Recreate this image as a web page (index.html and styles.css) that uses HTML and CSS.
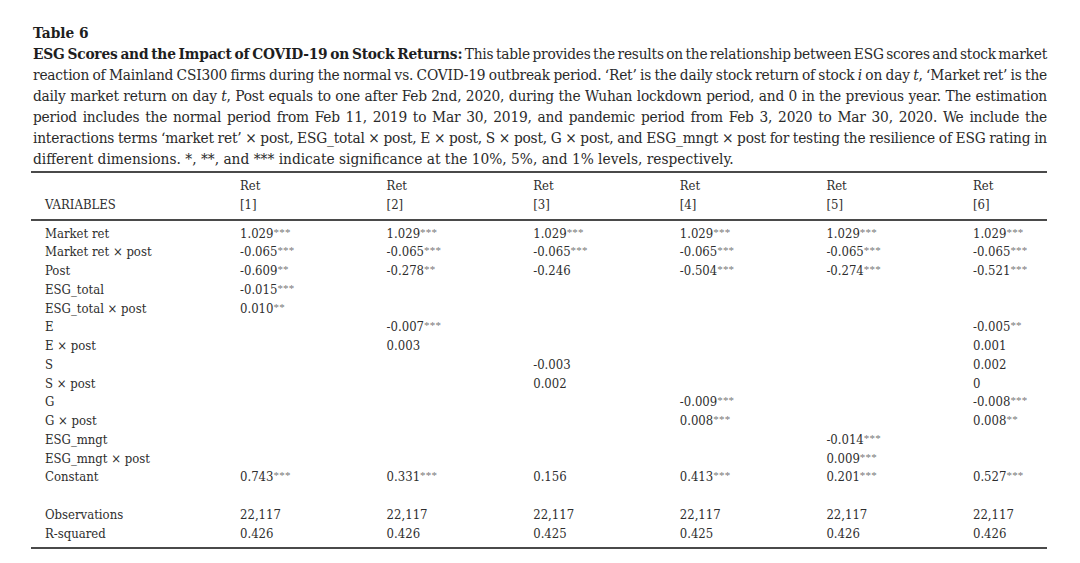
FILE: index.html
```html
<!DOCTYPE html>
<html>
<head>
<meta charset="utf-8">
<link rel="stylesheet" href="styles.css">
</head>
<body>
<div class="page">
  <div class="caption">
    <div class="title">Table 6</div>
    <div class="line"><b>ESG Scores and the Impact of COVID-19 on Stock Returns:</b> This table provides the results on the relationship between ESG scores and stock market</div>
    <div class="line">reaction of Mainland CSI300 firms during the normal vs. COVID-19 outbreak period. ‘Ret’ is the daily stock return of stock <i>i</i> on day <i>t</i>, ‘Market ret’ is the</div>
    <div class="line">daily market return on day <i>t</i>, Post equals to one after Feb 2nd, 2020, during the Wuhan lockdown period, and 0 in the previous year. The estimation</div>
    <div class="line">period includes the normal period from Feb 11, 2019 to Mar 30, 2019, and pandemic period from Feb 3, 2020 to Mar 30, 2020. We include the</div>
    <div class="line">interactions terms ‘market ret’ × post, ESG_total × post, E × post, S × post, G × post, and ESG_mngt × post for testing the resilience of ESG rating in</div>
    <div class="line last">different dimensions. *, **, and *** indicate significance at the 10%, 5%, and 1% levels, respectively.</div>
  </div>
  <table class="results">
    <colgroup>
      <col class="c-var"><col class="c-n"><col class="c-n"><col class="c-n"><col class="c-n"><col class="c-n"><col class="c-last">
    </colgroup>
    <thead>
      <tr class="h1"><th></th><th>Ret</th><th>Ret</th><th>Ret</th><th>Ret</th><th>Ret</th><th>Ret</th></tr>
      <tr class="h2"><th class="var">VARIABLES</th><th>[1]</th><th>[2]</th><th>[3]</th><th>[4]</th><th>[5]</th><th>[6]</th></tr>
    </thead>
    <tbody>
      <tr class="first"><td class="var">Market ret</td><td>1.029<sup>***</sup></td><td>1.029<sup>***</sup></td><td>1.029<sup>***</sup></td><td>1.029<sup>***</sup></td><td>1.029<sup>***</sup></td><td>1.029<sup>***</sup></td></tr>
      <tr><td class="var">Market ret × post</td><td>-0.065<sup>***</sup></td><td>-0.065<sup>***</sup></td><td>-0.065<sup>***</sup></td><td>-0.065<sup>***</sup></td><td>-0.065<sup>***</sup></td><td>-0.065<sup>***</sup></td></tr>
      <tr><td class="var">Post</td><td>-0.609<sup>**</sup></td><td>-0.278<sup>**</sup></td><td>-0.246</td><td>-0.504<sup>***</sup></td><td>-0.274<sup>***</sup></td><td>-0.521<sup>***</sup></td></tr>
      <tr><td class="var">ESG_total</td><td>-0.015<sup>***</sup></td><td></td><td></td><td></td><td></td><td></td></tr>
      <tr><td class="var">ESG_total × post</td><td>0.010<sup>**</sup></td><td></td><td></td><td></td><td></td><td></td></tr>
      <tr><td class="var">E</td><td></td><td>-0.007<sup>***</sup></td><td></td><td></td><td></td><td>-0.005<sup>**</sup></td></tr>
      <tr><td class="var">E × post</td><td></td><td>0.003</td><td></td><td></td><td></td><td>0.001</td></tr>
      <tr><td class="var">S</td><td></td><td></td><td>-0.003</td><td></td><td></td><td>0.002</td></tr>
      <tr><td class="var">S × post</td><td></td><td></td><td>0.002</td><td></td><td></td><td>0</td></tr>
      <tr><td class="var">G</td><td></td><td></td><td></td><td>-0.009<sup>***</sup></td><td></td><td>-0.008<sup>***</sup></td></tr>
      <tr><td class="var">G × post</td><td></td><td></td><td></td><td>0.008<sup>***</sup></td><td></td><td>0.008<sup>**</sup></td></tr>
      <tr><td class="var">ESG_mngt</td><td></td><td></td><td></td><td></td><td>-0.014<sup>***</sup></td><td></td></tr>
      <tr><td class="var">ESG_mngt × post</td><td></td><td></td><td></td><td></td><td>0.009<sup>***</sup></td><td></td></tr>
      <tr><td class="var">Constant</td><td>0.743<sup>***</sup></td><td>0.331<sup>***</sup></td><td>0.156</td><td>0.413<sup>***</sup></td><td>0.201<sup>***</sup></td><td>0.527<sup>***</sup></td></tr>
      <tr class="blank"><td class="var">&nbsp;</td><td></td><td></td><td></td><td></td><td></td><td></td></tr>
      <tr><td class="var">Observations</td><td>22,117</td><td>22,117</td><td>22,117</td><td>22,117</td><td>22,117</td><td>22,117</td></tr>
      <tr class="lastrow"><td class="var">R-squared</td><td>0.426</td><td>0.426</td><td>0.425</td><td>0.425</td><td>0.426</td><td>0.426</td></tr>
    </tbody>
  </table>
</div>
</body>
</html>
```

FILE: styles.css
```css
html, body {
  margin: 0;
  padding: 0;
  background: #ffffff;
}

.page {
  padding: 23px 33px 0 31px;
  font-family: "DejaVu Serif", "Liberation Serif", serif;
  font-stretch: condensed;
  color: #2a2a2a;
}

.caption {
  padding-left: 2px;
  font-size: 15.3px;
  line-height: 21px;
}

.title {
  font-weight: bold;
  color: #1e1e1e;
}

.caption b {
  color: #1e1e1e;
}

.line {
  text-align: justify;
  text-align-last: justify;
  white-space: nowrap;
  letter-spacing: -0.2px;
  word-spacing: -2.2px;
}

.line.last {
  text-align-last: left;
  letter-spacing: 0;
  word-spacing: 0;
}

.results {
  margin-top: 1px;
  width: 1016px;
  border-collapse: collapse;
  border-top: 2px solid #4a4a4a;
  border-bottom: 2px solid #4a4a4a;
  font-size: 13px;
  line-height: 18.77px;
  color: #2e2e2e;
}

.c-var { width: 209px; }
.c-n { width: 146.6px; }
.c-last { width: 74px; }

.results th,
.results td {
  padding: 0;
  text-align: left;
  font-weight: normal;
  white-space: nowrap;
  vertical-align: middle;
}

.results .var {
  padding-left: 14px;
}

.results .h1 th {
  padding-top: 4px;
}

.results .h2 th {
  padding-bottom: 4px;
  border-bottom: 2px solid #4a4a4a;
}

.results .first td {
  padding-top: 4px;
}

.results .lastrow td {
  padding-bottom: 3px;
}

.results sup {
  font-family: "Liberation Serif", serif;
  font-size: 11px;
  color: #7a7a7a;
  vertical-align: 2px;
  line-height: 0;
  letter-spacing: 0.2px;
}
```
